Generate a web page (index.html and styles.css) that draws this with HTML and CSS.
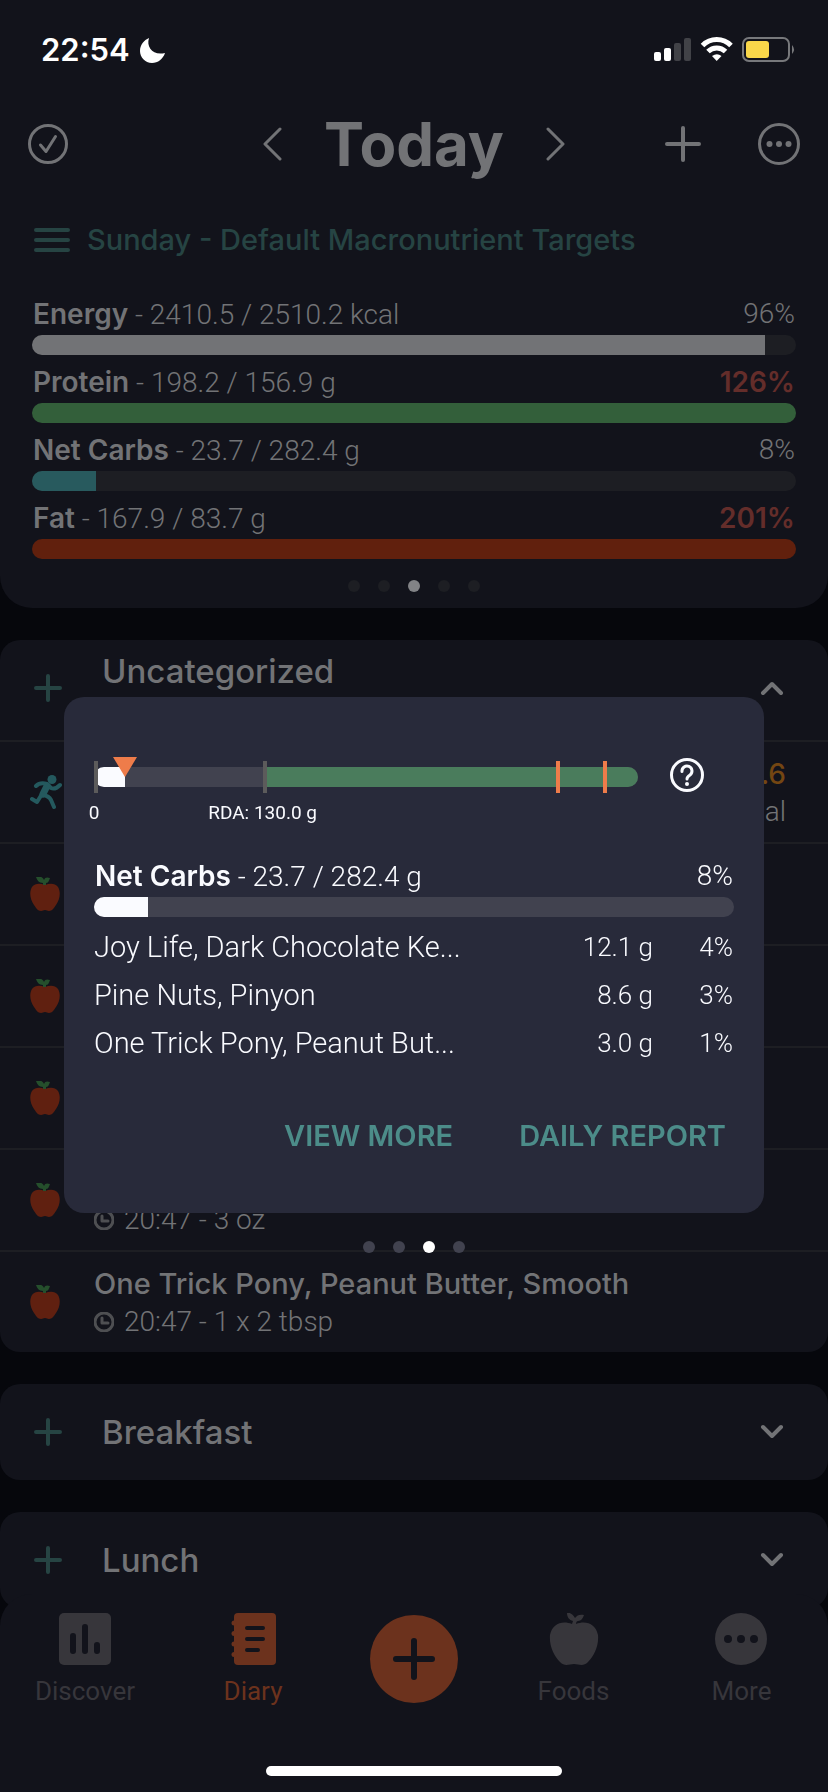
FILE: index.html
```html
<!DOCTYPE html>
<html lang="en">
<head>
	<meta charset="utf-8">
	<meta name="viewport" content="width=device-width, initial-scale=1">
	<title>Diary</title>
	<link rel="stylesheet" href="styles.css">
</head>
<body>
<!-- Icons used more than once -->
<svg class="defs">
	<symbol id="plus" viewBox="0 0 28 28"><path d="M14 2v24M2 14h24"/></symbol>
	<symbol id="down" viewBox="0 0 24 16"><path d="M3 3l9 9 9-9"/></symbol>
	<symbol id="clock" viewBox="0 0 20 20"><circle cx="10" cy="10" r="9"/><path d="M8 6v5h6"/></symbol>
	<symbol id="apple" viewBox="0 0 30 34">
		<path fill="#602010" d="M15 8C10 6 5 6 2 10c-3 5-2 12 2 18 2 3 4 6 7 6 2 0 2-1 4-1s2 1 4 1c3 0 5-3 7-6 4-6 5-13 2-18-3-4-8-4-13-2z"/>
		<path fill="#254f2c" d="M13 8V6C9 6 7 3 6 0c4-1 7 0 8 3 1-3 3-3 6-2-1 3-2 5-4 5v2z"/>
	</symbol>
</svg>

<div class="summary">
	<div class="status">
		<span class="time">22:54</span>
		<svg class="moon" width="25" height="25" viewBox="0 0 25 25"><path fill="#fff" d="M9 0C6 9 13 18 25 15 23 21 18 25 12 25 5 25 0 19 0 13 0 7 4 2 9 0z"/></svg>
		<svg class="phone" width="142" height="26" viewBox="0 0 142 26">
			<g fill="#fff"><rect x="0" y="15" width="7" height="9" rx="2"/><rect x="10" y="11" width="7" height="13" rx="2"/></g>
			<g fill="#414247"><rect x="20" y="6" width="7" height="18" rx="2"/><rect x="30" y="1" width="7" height="23" rx="2"/></g>
			<g fill="none" stroke="#fff" stroke-width="5"><path d="M48.5 8.500a20 20 0 0 1 28.500 0M54 14.500a12.500 12.500 0 0 1 17.500 0"/></g>
			<path fill="#fff" d="M58 19q5-3.500 9.500 0L62.700 24z"/>
			<rect x="89" y="1" width="46" height="23" rx="6" fill="none" stroke="#77787b" stroke-width="2"/>
			<rect x="92" y="4" width="23" height="17" rx="3" fill="#f9d74a"/>
			<path fill="#77787b" d="M138 8q4 4.500 0 9z"/>
		</svg>
	</div>

	<header>
		<button class="icon" aria-label="Complete day"><svg width="40" height="40" viewBox="0 0 40 40"><circle cx="20" cy="20" r="18.500" stroke-width="3"/><path stroke-width="3" d="M12.500 21l5.500 6.500 9.500-15"/></svg></button>
		<div class="day">
			<button class="icon" aria-label="Previous day"><svg width="20" height="34" viewBox="0 0 20 34"><path stroke-width="3" d="M18 2L3 17l15 15"/></svg></button>
			<h1>Today</h1>
			<button class="icon" aria-label="Next day"><svg width="20" height="34" viewBox="0 0 20 34"><path stroke-width="3" d="M2 2l15 15L2 32"/></svg></button>
		</div>
		<div class="tools">
			<button class="icon" aria-label="Add"><svg width="38" height="38" viewBox="0 0 38 38"><path stroke-width="4" d="M19 3v32M3 19h32"/></svg></button>
			<button class="icon" aria-label="Options"><svg width="42" height="42" viewBox="0 0 42 42"><circle cx="21" cy="21" r="19.500" stroke-width="3"/><g class="solid"><circle cx="11.500" cy="21" r="3"/><circle cx="21" cy="21" r="3"/><circle cx="30.500" cy="21" r="3"/></g></svg></button>
		</div>
	</header>

	<a class="targets" href="#targets">
		<svg width="36" height="24" viewBox="0 0 36 24"><path d="M2 2h32M2 12h32M2 22h32"/></svg>
		Sunday - Default Macronutrient Targets
	</a>

	<div class="macros">
		<div class="macro">
			<p><span><b>Energy</b> - 2410.5 / 2510.2 kcal</span><span>96%</span></p>
			<div class="bar"><div class="energy" style="width: 96%"></div></div>
		</div>
		<div class="macro">
			<p><span><b>Protein</b> - 198.2 / 156.9 g</span><b class="over">126%</b></p>
			<div class="bar"><div class="protein" style="width: 100%"></div></div>
		</div>
		<div class="macro">
			<p><span><b>Net Carbs</b> - 23.7 / 282.4 g</span><span>8%</span></p>
			<div class="bar"><div class="carbs" style="width: 8.4%"></div></div>
		</div>
		<div class="macro">
			<p><span><b>Fat</b> - 167.9 / 83.7 g</span><b class="over">201%</b></p>
			<div class="bar"><div class="fat" style="width: 100%"></div></div>
		</div>
	</div>
	<div class="dots"><i></i><i></i><i class="on"></i><i></i><i></i></div>
</div>

<main>
	<section class="card">
		<div class="group open">
			<button class="icon add" aria-label="Add food"><svg width="28" height="28"><use href="#plus"/></svg></button>
			<h2>Uncategorized</h2>
			<button class="icon up" aria-label="Collapse"><svg width="24" height="16"><use href="#down"/></svg></button>
		</div>
		<div class="entry">
			<svg class="run" width="32" height="34" viewBox="0 0 32 34">
				<circle cx="22" cy="4.500" r="4.500"/>
				<path stroke-width="4" d="M6 11q4-4 11-2l4 4q4 2 9-3"/>
				<path stroke-width="7" d="M17 11l-4 8"/>
				<path stroke-width="4" d="M12 19l-5 8-5-3M13 20q6 1 8 5l3 7"/>
			</svg>
			<div class="burned"><b>.6</b><span>kcal</span></div>
		</div>
		<div class="entry"><svg width="30" height="34"><use href="#apple"/></svg></div>
		<div class="entry"><svg width="30" height="34"><use href="#apple"/></svg></div>
		<div class="entry"><svg width="30" height="34"><use href="#apple"/></svg></div>
		<div class="entry">
			<svg width="30" height="34"><use href="#apple"/></svg>
			<div class="food"><p><svg class="clock" width="20" height="20"><use href="#clock"/></svg>20:47 - 3 oz</p></div>
		</div>
		<div class="entry">
			<svg width="30" height="34"><use href="#apple"/></svg>
			<div class="food">
				<h3>One Trick Pony, Peanut Butter, Smooth</h3>
				<p><svg class="clock" width="20" height="20"><use href="#clock"/></svg>20:47 - 1 x 2 tbsp</p>
			</div>
		</div>
	</section>

	<section class="card">
		<div class="group">
			<button class="icon add" aria-label="Add to breakfast"><svg width="28" height="28"><use href="#plus"/></svg></button>
			<h2>Breakfast</h2>
			<button class="icon" aria-label="Expand"><svg width="24" height="16"><use href="#down"/></svg></button>
		</div>
	</section>

	<section class="card">
		<div class="group">
			<button class="icon add" aria-label="Add to lunch"><svg width="28" height="28"><use href="#plus"/></svg></button>
			<h2>Lunch</h2>
			<button class="icon" aria-label="Expand"><svg width="24" height="16"><use href="#down"/></svg></button>
		</div>
	</section>
</main>

<nav>
	<a href="#discover">
		<svg width="52" height="52" viewBox="0 0 52 52"><rect width="52" height="52" rx="5"/><path class="cut" stroke-width="6" d="M14 23v15M26 14v24M38 32v6"/></svg>
		Discover
	</a>
	<a href="#diary" class="current">
		<svg width="52" height="52" viewBox="0 0 52 52"><rect x="7" width="42" height="52" rx="4"/><circle cx="7" cy="10" r="2.500"/><circle cx="7" cy="20.500" r="2.500"/><circle cx="7" cy="31" r="2.500"/><circle cx="7" cy="41.500" r="2.500"/><path class="cut" stroke-width="4" d="M20 15h16M20 26h16M20 37h11"/></svg>
		Diary
	</a>
	<button class="new" aria-label="Add entry"><svg width="44" height="44" viewBox="0 0 44 44"><path class="cut" stroke-width="6" d="M22 4v36M4 22h36"/></svg></button>
	<a href="#foods">
		<svg width="52" height="52" viewBox="0 0 52 52"><path d="M24 11C14 7 4 11 2 22c-1 11 4 21 10 27 5 5 9 2 14 2s9 3 14-2c6-6 11-16 10-27C48 11 38 7 28 11c0-2 1-3 2-3 3 0 5-3 6-6-4-1-7 0-9 3-2-4-6-6-8-5 0 4 2 7 6 8z"/></svg>
		Foods
	</a>
	<a href="#more">
		<svg width="52" height="52" viewBox="0 0 52 52"><circle cx="26" cy="26" r="26"/><path class="cut" stroke-width="8" d="M13 26h0M26 26h0M39 26h0"/></svg>
		More
	</a>
</nav>
<div class="home"></div>

<!-- Nutrient details popup -->
<div class="overlay">
	<div class="dialog" role="dialog" aria-label="Net Carbs">
		<div class="target">
			<div class="range">
				<div class="segments">
					<div class="eaten" style="width: 5.7%"></div>
					<div class="enough" style="width: 68.4%"></div>
				</div>
				<i class="tick" style="left: 0%"></i>
				<i class="tick" style="left: 31%"></i>
				<i class="tick goal" style="left: 85%"></i>
				<i class="tick goal" style="left: 93.6%"></i>
				<i class="marker" style="left: 5.7%"></i>
				<span class="mark" style="left: 0%">0</span>
				<span class="mark" style="left: 31%">RDA: 130.0 g</span>
			</div>
			<button class="icon help" aria-label="Help"><svg width="34" height="34" viewBox="0 0 34 34"><circle cx="17" cy="17" r="15.500" stroke-width="3"/><path stroke-width="3" d="M12 13.500a5 5 0 1 1 8 3.500q-3 2-3 4"/><circle class="solid" cx="17" cy="26" r="2"/></svg></button>
		</div>
		<div class="macro">
			<p><span><b>Net Carbs</b> - 23.7 / 282.4 g</span><span>8%</span></p>
			<div class="bar"><div class="eaten" style="width: 8.4%"></div></div>
		</div>
		<table>
			<tr><td>Joy Life, Dark Chocolate Ke...</td><td>12.1 g</td><td>4%</td></tr>
			<tr><td>Pine Nuts, Pinyon</td><td>8.6 g</td><td>3%</td></tr>
			<tr><td>One Trick Pony, Peanut But...</td><td>3.0 g</td><td>1%</td></tr>
		</table>
		<div class="actions">
			<button>VIEW MORE</button>
			<button>DAILY REPORT</button>
		</div>
	</div>
	<div class="dots"><i></i><i></i><i class="on"></i><i></i></div>
</div>
</body>
</html>
```
FILE: styles.css
```css
* { box-sizing: border-box; }
body {
	margin: 0;
	min-height: 100vh;
	font: 300 28px/38px Roboto, "Liberation Sans", sans-serif;
	color: #727376;
	background-color: #06070c;
}
h1, h2, h3, p { margin: 0; }
h1, h2, h3, b, .targets, .time, .actions { font-family: Inter, "Liberation Sans", sans-serif; }
b { font-weight: 600; }
svg { display: block; flex: none; }
a { color: inherit; text-decoration: none; }
button {
	padding: 0;
	border: 0;
	font: inherit;
	color: inherit;
	background: none;
}
.defs { position: absolute; width: 0; height: 0; }
.icon svg, .targets svg, .clock, .run, .cut {
	fill: none;
	stroke: currentColor;
	stroke-linecap: round;
	stroke-linejoin: round;
}
.icon .solid { fill: currentColor; stroke: none; }

/* Top panel */
.summary {
	padding-bottom: 16px;
	border-radius: 0 0 32px 32px;
	background-color: #12131b;
}
.status {
	display: flex;
	align-items: center;
	height: 100px;
	padding: 0 32px 0 41px;
	color: white;
}
.time { font-size: 31px; font-weight: 600; }
.moon { margin-left: 10px; }
.phone { margin-left: auto; }
header {
	display: grid;
	grid-template-columns: 1fr auto 1fr;
	align-items: center;
	height: 88px;
	padding: 0 28px;
}
.day {
	display: flex;
	align-items: center;
	gap: 42px;
}
h1 { font-size: 60px; line-height: 70px; font-weight: 700; }
.tools {
	display: flex;
	justify-content: flex-end;
	align-items: center;
	gap: 56px;
}
.targets {
	display: flex;
	align-items: center;
	gap: 17px;
	height: 104px;
	padding: 0 34px;
	font-size: 29px;
	font-weight: 500;
	color: #264443;
}
.targets svg { stroke-width: 4; }
.macros {
	display: grid;
	gap: 8px;
	padding: 3px 32px 0;
}
.macro p {
	display: flex;
	justify-content: space-between;
	height: 40px;
	padding: 0 1px;
}
.over { color: #642d2a; }
.bar {
	height: 20px;
	border-radius: 10px;
	overflow: hidden;
	background-color: #1d1e23;
}
.bar div { height: 20px; }
.energy { background-color: #727376; }
.protein { background-color: #335f3a; }
.carbs { background-color: #285a5e; }
.fat { background-color: #61200d; }
.dots {
	display: flex;
	justify-content: center;
	gap: 18px;
	margin-top: 21px;
}
.dots i {
	width: 12px;
	height: 12px;
	border-radius: 6px;
	background-color: #1d1e23;
}
.dots .on { background-color: #828386; }

/* Meals */
main {
	display: grid;
	gap: 32px;
	padding-top: 32px;
}
.card {
	border-radius: 20px;
	background-color: #12131b;
}
.group {
	display: flex;
	align-items: center;
	height: 96px;
	padding: 0 44px 0 34px;
}
.open {
	height: 102px;
	padding-bottom: 4px;
	border-bottom: solid 2px #1d1e23;
}
.group h2 {
	flex: 1;
	margin-left: 40px;
	font-size: 33px;
	line-height: 38px;
	font-weight: 500;
}
.open h2 { min-height: 72px; }
.add { color: #264443; }
.group svg { stroke-width: 4; }
.up svg { transform: rotate(180deg); }
.entry {
	display: flex;
	align-items: center;
	gap: 34px;
	height: 102px;
	padding: 0 42px 0 30px;
	border-bottom: solid 2px #1d1e23;
}
.entry:last-child { height: 100px; border: 0; }
.food {
	display: flex;
	flex-direction: column;
	justify-content: flex-end;
	height: 76px;
	margin-top: 2px;
}
.food h3 { font-size: 29px; font-weight: 500; }
.food p {
	display: flex;
	align-items: center;
	gap: 10px;
}
.clock { color: #4e4f52; stroke-width: 3; }
.run { color: #24595e; }
.run circle { fill: currentColor; stroke: none; }
.burned { margin-top: 2px; margin-left: auto; text-align: right; }
.burned b, .burned span { display: block; }
.burned b { font-weight: 500; color: #744612; }

/* Bottom navigation */
nav {
	position: fixed;
	left: 0;
	right: 0;
	bottom: 0;
	display: grid;
	grid-template-columns: 170fr 166fr 156fr 163fr 173fr;
	justify-items: center;
	align-items: start;
	height: 198px;
	padding-top: 19px;
	border-radius: 32px 32px 0 0;
	font-size: 26px;
	font-weight: 400;
	color: #37363b;
	background-color: #12131b;
}
nav a {
	display: flex;
	flex-direction: column;
	align-items: center;
	gap: 7px;
}
nav svg { fill: currentColor; }
nav .cut { stroke: #12131b; }
.current { color: #6c321d; }
.new {
	display: flex;
	align-items: center;
	justify-content: center;
	width: 88px;
	height: 88px;
	margin-top: 2px;
	border-radius: 44px;
	background-color: #6c321d;
}
.home {
	position: fixed;
	left: 50%;
	bottom: 16px;
	width: 296px;
	height: 10px;
	margin-left: -148px;
	border-radius: 5px;
	background-color: white;
}

/* Popup */
.overlay {
	position: fixed;
	top: 697px;
	left: 64px;
	right: 64px;
	color: #fafbff;
}
.dialog {
	padding: 54px 30px 49px;
	border-radius: 20px;
	background-color: #282a3a;
}
.target {
	display: flex;
	align-items: center;
	gap: 32px;
	height: 48px;
	margin-bottom: 58px;
	padding-right: 30px;
}
.range { position: relative; flex: 1; }
.segments {
	display: flex;
	justify-content: space-between;
	height: 20px;
	margin-top: 4px;
	border-radius: 10px;
	overflow: hidden;
	background-color: #41424f;
}
.eaten { background-color: #fafbff; }
.enough { background-color: #4a7c5c; }
.tick {
	position: absolute;
	top: -2px;
	width: 4px;
	height: 32px;
	background-color: #5c5b5b;
}
.goal { background-color: #ee7c4a; }
.marker {
	position: absolute;
	top: -6px;
	margin-left: -12px;
	border: solid 12px transparent;
	border-top: solid 20px #ee7c4a;
	border-bottom: 0;
}
.mark {
	position: absolute;
	top: 38px;
	font-size: 19px;
	line-height: 24px;
	font-weight: 400;
	white-space: nowrap;
	transform: translateX(-50%);
}
.dialog .bar { background-color: #41424f; }
table {
	width: 100%;
	margin-top: 6px;
	border-collapse: collapse;
	table-layout: fixed;
}
td {
	height: 48px;
	padding: 0;
	font-size: 29px;
	white-space: nowrap;
}
td + td {
	width: 110px;
	padding-right: 1px;
	font-size: 26px;
	text-align: right;
}
td:last-child { width: 80px; }
.actions {
	display: flex;
	justify-content: flex-end;
	gap: 66px;
	margin-top: 41px;
	padding-right: 8px;
}
.actions button {
	height: 56px;
	font-size: 29px;
	font-weight: 600;
	color: #4c8c89;
}
.overlay .dots { margin-top: 28px; }
.overlay .dots i { background-color: #41424f; }
.overlay .dots .on { background-color: white; }
```
